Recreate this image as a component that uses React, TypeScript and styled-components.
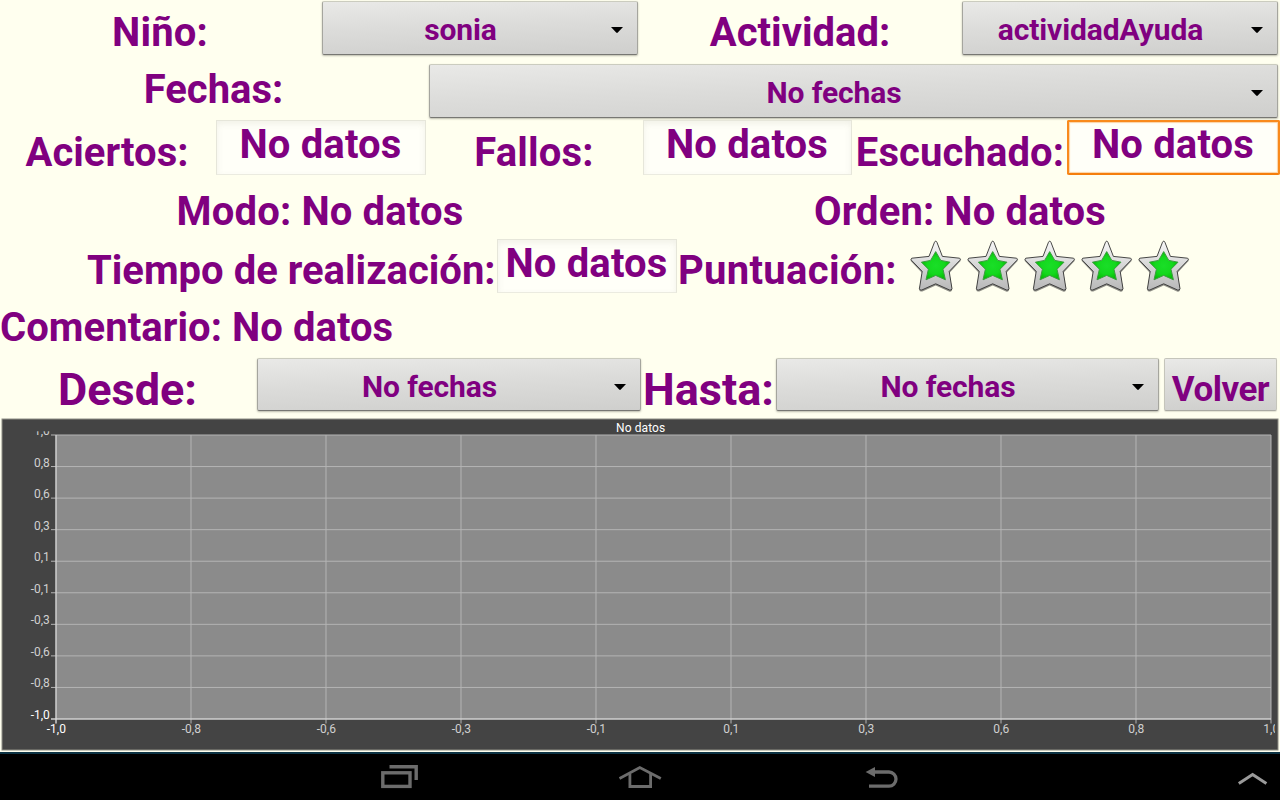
import React from "react";
import styled, { createGlobalStyle } from "styled-components";

const GlobalStyle = createGlobalStyle`
  * { box-sizing: border-box; }
  body { margin: 0; background: #ffffef; font-family: Roboto, "Liberation Sans", sans-serif; }
`;

const Screen = styled.main`
  display: flex;
  flex-direction: column;
  width: 1280px;
  height: 800px;
  overflow: hidden;
  background: #ffffef;
`;

const Row = styled.div<{ $h: number }>`
  display: flex;
  align-items: flex-start;
  flex: none;
  height: ${(p) => p.$h}px;
`;

const Label = styled.div<{ $w: number; $top: number; $size?: number; $ls?: number; $align?: string; $pad?: number }>`
  flex: none;
  width: ${(p) => p.$w}px;
  padding-top: ${(p) => p.$top}px;
  padding-left: ${(p) => p.$pad ?? 0}px;
  text-align: ${(p) => p.$align ?? "center"};
  font-size: ${(p) => p.$size ?? 40}px;
  line-height: 47px;
  letter-spacing: ${(p) => p.$ls ?? 0}px;
  font-weight: 700;
  color: #800080;
  white-space: nowrap;
`;

const Field = styled.div<{ $w: number; $top: number; $ml?: number; $mr?: number; $h?: number; $focus?: boolean }>`
  flex: none;
  width: ${(p) => p.$w}px;
  height: ${(p) => p.$h ?? 55}px;
  margin: ${(p) => p.$top}px ${(p) => p.$mr ?? 0}px 0 ${(p) => p.$ml ?? 0}px;
  border: ${(p) => (p.$focus ? "2px solid #f98a1c" : "1px solid #e6e6da")};
  border-bottom-color: ${(p) => (p.$focus ? "#f57e0c" : "#ebebe0")};
  border-radius: ${(p) => (p.$focus ? 2 : 0)}px;
  background: #fffff8;
  box-shadow: ${(p) => (p.$focus ? "inset 0 0 1px 1px #fbd3a5" : "inset 0 3px 6px rgba(120,120,100,0.1)")};
  font-size: 40px;
  line-height: ${(p) => (p.$focus ? 45 : 47)}px;
  letter-spacing: 0.15px;
  padding-right: 1px;
  font-weight: 700;
  color: #800080;
  text-align: center;
  white-space: nowrap;
`;

const ButtonFace = styled.button<{ $w: number; $h: number; $top: number; $ml?: number; $mr?: number }>`
  flex: none;
  display: flex;
  align-items: center;
  width: ${(p) => p.$w}px;
  height: ${(p) => p.$h}px;
  margin: ${(p) => p.$top}px ${(p) => p.$mr ?? 0}px 0 ${(p) => p.$ml ?? 0}px;
  padding: 0;
  border: 1px solid #a5a59e;
  border-top-color: #cbccbf;
  border-bottom-color: #777773;
  border-radius: 2px;
  background: linear-gradient(178deg, #e9e9e7 0%, #dcdcda 45%, #cfcfcd 100%);
  box-shadow: 0 1px 2px rgba(60, 60, 50, 0.35);
  font-family: inherit;
  font-weight: 700;
  font-size: 30px;
  line-height: 36px;
  letter-spacing: -0.12px;
  color: #800080;
  white-space: nowrap;
`;

const PlainButton = styled(ButtonFace)`
  justify-content: center;
  padding-top: 11px;
  border-color: #c5c5bb;
  border-bottom-color: #aaaaa3;
  box-shadow: 0 1px 1px rgba(60, 60, 50, 0.15);
  font-size: 35px;
  letter-spacing: -0.5px;
`;

const SpinnerText = styled.span`
  flex: 1;
  text-align: center;
  padding-top: 4px;
`;

const Caret = styled.svg`
  flex: none;
  width: 12px;
  height: 6px;
  margin: 4px 14px 0 13px;
`;

function Spinner({ text, ...box }: { text: string; $w: number; $h: number; $top: number; $ml?: number; $mr?: number }) {
  return (
    <ButtonFace {...box}>
      <SpinnerText>{text}</SpinnerText>
      <Caret viewBox="0 0 12 6">
        <path d="M0 0H12L6.8 5.6Q6 6.2 5.2 5.6Z" fill="#000" />
      </Caret>
    </ButtonFace>
  );
}

const Stars = styled.div`
  display: flex;
  padding: 3px 0 0 12px;
`;

const StarSvg = styled.svg`
  display: block;
  width: 57px;
  height: 56px;
`;

function Star() {
  return (
    <StarSvg viewBox="0 0 57 56">
      <defs>
        <linearGradient id="metal" x1="0" y1="0" x2="0" y2="1">
          <stop offset="0" stopColor="#f8f8f8" />
          <stop offset="0.5" stopColor="#d6d6d6" />
          <stop offset="1" stopColor="#b8b8b8" />
        </linearGradient>
        <radialGradient id="green">
          <stop offset="0" stopColor="#1ade28" />
          <stop offset="0.6" stopColor="#14d81e" />
          <stop offset="1" stopColor="#04c004" />
        </radialGradient>
      </defs>
      <path
        d="M28.7 2.6L35 17.6L52.6 19Q54.4 20.4 52.8 21.8L42.4 33L45.2 50Q44.2 52.4 42 51.4L28.7 45.4L15.4 51.4Q12.8 52.2 12.2 50L15 33L4.4 21.8Q2.6 20 4.6 19L22.6 17.6Z"
        fill="#222"
        opacity="0.5"
      />
      <path
        d="M28.7 1.2Q29.5 1.2 29.9 2.2L35.4 16.4L52.6 18.2Q54.2 19 53 20.2L42.2 31.4L45 48.8Q44.4 50.6 42.6 50L28.7 43.8L14.8 50Q13 50.6 12.4 48.8L15.2 31.4L4.4 20.2Q3.2 19 4.8 18.2L22 16.4L27.5 2.2Q27.9 1.2 28.7 1.2Z"
        fill="url(#metal)"
        stroke="#333"
        strokeWidth="0.9"
      />
      <path
        d="M28.7 11.6L33.8 20.4L43 22.2L36 29.2L38.4 39.8L28.7 35.4L19 39.8L21.4 29.2L14.4 22.2L23.6 20.4Z"
        fill="url(#green)"
        stroke="#3c9c40"
        strokeWidth="1"
        strokeLinejoin="round"
      />
    </StarSvg>
  );
}

const ChartPanel = styled.section`
  flex: none;
  height: 334px;
`;

const ChartSvg = styled.svg`
  display: block;
  font-family: Roboto, "Liberation Sans", sans-serif;
  font-size: 12px;
`;

const TICKS = ["-1,0", "-0,8", "-0,6", "-0,3", "-0,1", "0,1", "0,3", "0,6", "0,8", "1,0"];
const X0 = 56;
const X1 = 1271;
const Y0 = 17;
const Y1 = 301;

function Chart() {
  return (
    <ChartPanel>
      <ChartSvg width="1280" height="334" viewBox="0 0 1280 334">
        <defs>
          <clipPath id="labels">
            <rect x="5" y="13.3" width="1270" height="316" />
          </clipPath>
        </defs>
        <rect x="2" y="1" width="1276" height="331" fill="#444" stroke="#8e8e85" />
        <rect x={X0} y={Y0} width={X1 - X0} height={Y1 - Y0} fill="#8b8b8b" />
        <text x="640.7" y="14" fill="#fff" textAnchor="middle" letterSpacing="0.1">No datos</text>
        {TICKS.map((t, i) => {
          const x = X0 + 135 * i;
          const y = Y1 - ((Y1 - Y0) / 9) * i;
          return (
            <g key={t}>
              <line x1={x} x2={x} y1={Y0} y2={Y1 + 4.5} stroke="#b4b4b4" />
              <line x1="51" x2={X1} y1={y} y2={y} stroke="#b4b4b4" />
              <g clipPath="url(#labels)" fill={i === 0 ? "#fff" : "#d0d0d0"}>
                <text x="49.8" y={y} textAnchor="end">{t}</text>
                <text x={x + 0.3} y="315" textAnchor="middle">{t}</text>
              </g>
            </g>
          );
        })}
        <line x1={X0} x2={X0} y1={Y0} y2={Y1 + 4.5} stroke="#dcdcdc" />
        <line x1="51" x2={X1} y1={Y1} y2={Y1} stroke="#dcdcdc" />
      </ChartSvg>
    </ChartPanel>
  );
}

const NavBar = styled.nav`
  display: flex;
  flex: none;
  height: 48px;
  padding-top: 8px;
  border-top: 2px solid #0c3344;
  background: #000;
`;

const NavIcon = styled.svg<{ $ml: number; $color?: string }>`
  flex: none;
  display: block;
  width: 48px;
  height: 30px;
  margin-left: ${(p) => p.$ml}px;
  fill: none;
  stroke: ${(p) => p.$color ?? "#6c6c6c"};
`;

export default function App() {
  return (
    <>
      <GlobalStyle />
      <Screen>
        <Row $h={60}>
          <Label $w={320} $top={9} $ls={0.2}>Niño:</Label>
          <Spinner text="sonia" $w={316} $h={54} $top={1} $ml={2} $mr={2} />
          <Label $w={320} $top={9}>Actividad:</Label>
          <Spinner text="actividadAyuda" $w={316} $h={54} $top={1} $ml={2} />
        </Row>
        <Row $h={59}>
          <Label $w={427} $top={6}>Fechas:</Label>
          <Spinner text="No fechas" $w={849} $h={54} $top={4} $ml={2} />
        </Row>
        <Row $h={59}>
          <Label $w={214} $top={10}>Aciertos:</Label>
          <Field $w={210} $top={1} $ml={2} $mr={1}>No datos</Field>
          <Label $w={214} $top={10} $ls={0.2}>Fallos:</Label>
          <Field $w={209} $top={1} $ml={2} $mr={1}>No datos</Field>
          <Label $w={214} $top={10} $ls={0.1}>Escuchado:</Label>
          <Field $w={213} $top={1} $focus>No datos</Field>
        </Row>
        <Row $h={59}>
          <Label $w={640} $top={10} $ls={0.15}>Modo: No datos</Label>
          <Label $w={640} $top={10} $ls={0.1}>Orden: No datos</Label>
        </Row>
        <Row $h={59}>
          <Label $w={497} $top={10} $align="left" $pad={87}>Tiempo de realización:</Label>
          <Field $w={180} $top={2} $h={54}>No datos</Field>
          <Label $w={218} $top={10} $align="left" $pad={1} $ls={0.3}>Puntuación:</Label>
          <Stars>
            {[0, 1, 2, 3, 4].map((n) => (
              <Star key={n} />
            ))}
          </Stars>
        </Row>
        <Row $h={59}>
          <Label $w={640} $top={8} $align="left" $ls={0.05}>Comentario: No datos</Label>
        </Row>
        <Row $h={63}>
          <Label $w={255} $top={11} $size={45}>Desde:</Label>
          <Spinner text="No fechas" $w={384} $h={53} $top={3} $ml={2} />
          <Label $w={135} $top={11} $size={45}>Hasta:</Label>
          <Spinner text="No fechas" $w={383} $h={53} $top={3} />
          <PlainButton $w={113} $h={53} $top={3} $ml={5}>Volver</PlainButton>
        </Row>
        <Chart />
        <NavBar>
          <NavIcon $ml={376} viewBox="376 762 48 30" strokeWidth="3.4">
            <path d="M389.5 766.8H416.2V780" />
            <rect x="382.8" y="772.8" width="27.2" height="13.6" />
          </NavIcon>
          <NavIcon $ml={192} viewBox="616 762 48 30" strokeWidth="2.8">
            <path d="M619.5 778.6L639.8 767.6L660.8 778.6" />
            <path d="M629.9 774V786.5H650.6V774" />
          </NavIcon>
          <NavIcon $ml={194} viewBox="858 762 48 30" strokeWidth="3.3">
            <path d="M874 772H889A7 7.1 0 0 1 889 786.2H869" />
            <path d="M865.6 772L875 767V777Z" fill="#6c6c6c" stroke="none" />
          </NavIcon>
          <NavIcon $ml={322} $color="#9a9a9a" viewBox="1228 762 48 30" strokeWidth="3">
            <path d="M1238.8 783.6L1252.6 774.6L1266.4 783.6" />
          </NavIcon>
        </NavBar>
      </Screen>
    </>
  );
}
